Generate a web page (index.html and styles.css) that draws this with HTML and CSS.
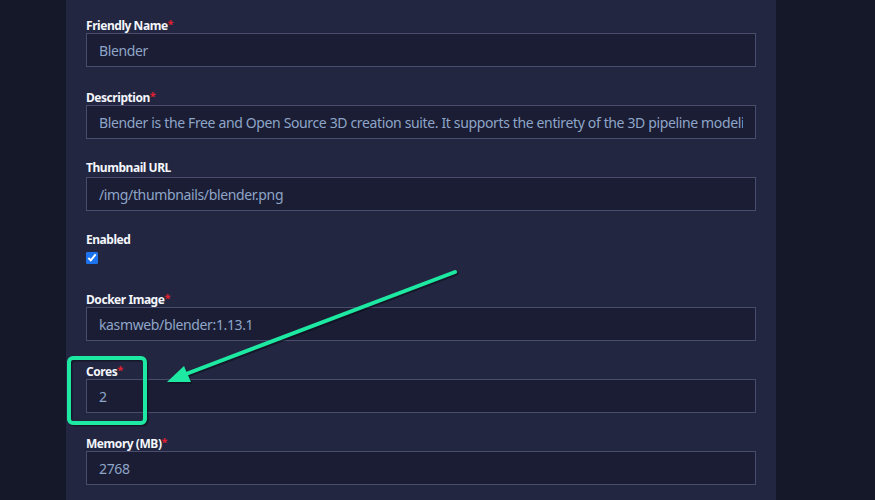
FILE: index.html
```html
<!DOCTYPE html>
<html lang="en">
<head>
<meta charset="utf-8">
<title>Edit Workspace</title>
<link rel="stylesheet" href="styles.css">
</head>
<body>
<div class="page">
  <div class="side side-left"></div>
  <main class="panel">
    <div class="field">
      <label class="label">Friendly Name<span class="req">*</span></label>
      <input class="input" type="text" value="Blender">
    </div>
    <div class="field">
      <label class="label">Description<span class="req">*</span></label>
      <input class="input" type="text" value="Blender is the Free and Open Source 3D creation suite. It supports the entirety of the 3D pipeline modeling, rigging, animation, simulation, rendering, compositing and motion tracking.">
    </div>
    <div class="field">
      <label class="label">Thumbnail URL</label>
      <input class="input" type="text" value="/img/thumbnails/blender.png">
    </div>
    <div class="field">
      <label class="label">Enabled</label>
      <div class="check-row"><input class="check" type="checkbox" checked></div>
    </div>
    <div class="field">
      <label class="label">Docker Image<span class="req">*</span></label>
      <input class="input" type="text" value="kasmweb/blender:1.13.1">
    </div>
    <div class="field">
      <label class="label">Cores<span class="req">*</span></label>
      <input class="input" type="text" value="2">
    </div>
    <div class="field">
      <label class="label">Memory (MB)<span class="req">*</span></label>
      <input class="input" type="text" value="2768">
    </div>
  </main>
  <div class="side side-right"></div>
</div>
<svg class="annotation" width="875" height="500" viewBox="0 0 875 500">
  <g transform="translate(1.5,1.5)" opacity="0.55">
    <rect x="69" y="358" width="76" height="65" rx="4" fill="none" stroke="#0b0d18" stroke-width="4"/>
    <line x1="455" y1="272" x2="186" y2="374" stroke="#0b0d18" stroke-width="4" stroke-linecap="round"/>
    <polygon points="167,382 191,382 184,366" fill="#0b0d18"/>
  </g>
  <rect x="69" y="358" width="76" height="65" rx="4" fill="none" stroke="#1de9a2" stroke-width="4"/>
  <line x1="455" y1="272" x2="186" y2="374" stroke="#1de9a2" stroke-width="4" stroke-linecap="round"/>
  <polygon points="167,382 191,382 184,366" fill="#1de9a2"/>
</svg>
</body>
</html>
```
FILE: styles.css
```css
html, body {
  margin: 0;
  padding: 0;
  width: 875px;
  height: 500px;
  overflow: hidden;
  background: #161a2b;
  font-family: "Noto Sans", "Open Sans", "DejaVu Sans", sans-serif;
}

.page {
  display: flex;
  height: 500px;
}

.side-left {
  width: 66px;
  flex: none;
  background: #151828;
}

.side-right {
  flex: 1;
  background: #151828;
}

.panel {
  width: 670px;
  flex: none;
  background: #222640;
  padding: 15px 20px 0 20px;
}

.field {
  margin-bottom: 20px;
  display: flex;
  flex-direction: column;
}

.label {
  display: block;
  height: 18px;
  line-height: 18px;
  font-size: 12px;
  font-weight: 700;
  color: #f4f6fb;
  letter-spacing: -0.45px;
}

.req {
  color: #e3202f;
  font-weight: 700;
  font-size: 11px;
  vertical-align: 2px;
  margin-left: 0;
}

.input {
  box-sizing: border-box;
  width: 670px;
  height: 34px;
  margin: 0;
  padding: 0 12px;
  background: #1a1d33;
  border: 1px solid #494c6c;
  border-radius: 0;
  color: #8fa5c8;
  font-family: inherit;
  font-size: 14px;
  letter-spacing: -0.36px;
  outline: none;
}

.check-row {
  height: 20px;
}

.check {
  margin: 3px 0 0 0;
  width: 12px;
  height: 12px;
  accent-color: #1a73f0;
  display: block;
}

.annotation {
  position: absolute;
  left: 0;
  top: 0;
  pointer-events: none;
}
```
